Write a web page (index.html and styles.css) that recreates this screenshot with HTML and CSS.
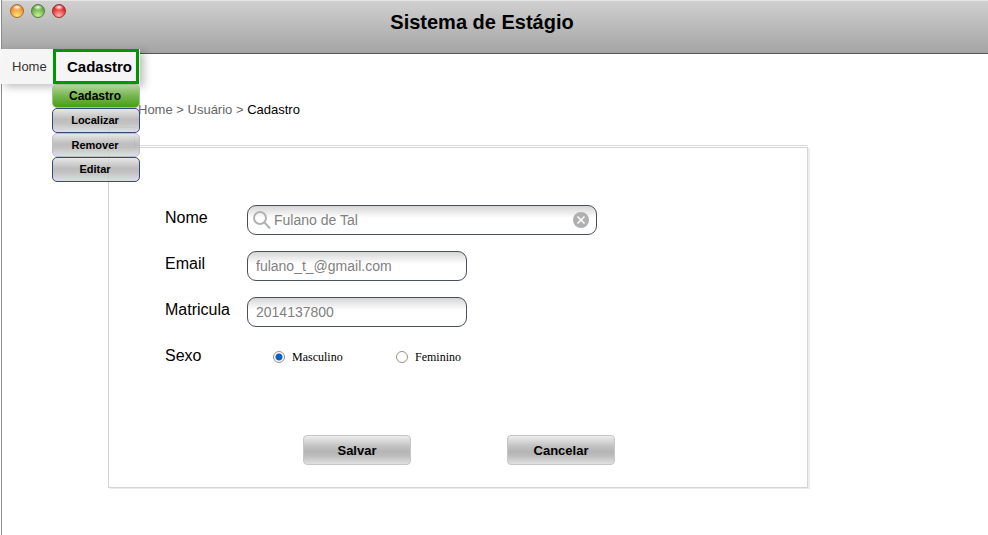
FILE: index.html
```html
<!DOCTYPE html>
<html lang="pt-BR">
<head>
<meta charset="utf-8">
<title>Sistema de Estágio</title>
<link rel="stylesheet" href="styles.css">
</head>
<body>
<div class="window">
  <header class="titlebar">
    <div class="lights">
      <span class="light amber"></span>
      <span class="light green"></span>
      <span class="light red"></span>
    </div>
    <h1>Sistema de Estágio</h1>
  </header>
  <nav class="menu">
    <div class="tabs">
      <a class="tab" href="#">Home</a>
      <a class="tab current" href="#">Cadastro</a>
    </div>
    <div class="submenu">
      <a class="item active" href="#">Cadastro</a>
      <a class="item outlined" href="#">Localizar</a>
      <a class="item" href="#">Remover</a>
      <a class="item outlined" href="#">Editar</a>
    </div>
  </nav>
  <main>
    <div class="breadcrumb"><a href="#">Home</a> &gt; <a href="#">Usuário</a> &gt; <span>Cadastro</span></div>
    <div class="panel-top"><div class="panel-tab"></div></div>
    <form class="panel">
      <div class="row">
        <label for="nome">Nome</label>
        <div class="field search">
          <svg class="lens" viewBox="0 0 18 19"><circle cx="7" cy="7" r="6"/><path d="M11.5 11.5L17 17.5"/></svg>
          <input id="nome" type="text" value="Fulano de Tal">
          <button class="clear" type="button" aria-label="Limpar"><svg viewBox="0 0 16 16"><circle cx="8" cy="8" r="8"/><path d="M4.5 4.5l7 7M11.5 4.5l-7 7"/></svg></button>
        </div>
      </div>
      <div class="row">
        <label for="email">Email</label>
        <div class="field"><input id="email" type="text" value="fulano_t_@gmail.com"></div>
      </div>
      <div class="row">
        <label for="matricula">Matricula</label>
        <div class="field"><input id="matricula" type="text" value="2014137800"></div>
      </div>
      <div class="row" role="radiogroup" aria-labelledby="sexo">
        <span class="caption" id="sexo">Sexo</span>
        <div class="choices">
          <label class="choice"><input type="radio" name="sexo" checked>Masculino</label>
          <label class="choice"><input type="radio" name="sexo">Feminino</label>
        </div>
      </div>
      <div class="actions">
        <button class="button" type="submit">Salvar</button>
        <button class="button" type="button">Cancelar</button>
      </div>
    </form>
  </main>
</div>
</body>
</html>
```
FILE: styles.css
```css
* { box-sizing: border-box; }
body {
  margin: 0;
  background: #fff;
  color: #000;
  font-family: "Liberation Sans", Arial, sans-serif;
}
a { color: inherit; text-decoration: none; }
.window {
  position: relative;
  min-height: 100vh;
  margin-left: 1px;
  border-left: 1px solid #8c8c8c;
}
.titlebar {
  display: grid;
  grid-template-columns: 64px 1fr 98px;
  height: 54px;
  padding-left: 8px;
  border-top: 1px solid #e6e6e6;
  border-bottom: 1px solid #555;
  background: linear-gradient(#d0d0d0, #a4a4a4);
}
.lights { display: flex; gap: 7px; padding-top: 3px; }
.light {
  width: 14px;
  height: 14px;
  border: 1px solid;
  border-radius: 50%;
}
.amber { border-color: #a8682c; background: radial-gradient(ellipse 5px 3px at 50% 18%, #fff, transparent), radial-gradient(circle at 50% 90%, #ffe27a, #ee9c38 60%, #b8641c); }
.green { border-color: #4f7f38; background: radial-gradient(ellipse 5px 3px at 50% 18%, #fff, transparent), radial-gradient(circle at 50% 90%, #c8f598, #70b048 60%, #3a7a24); }
.red { border-color: #982c2c; background: radial-gradient(ellipse 5px 3px at 50% 18%, #fff, transparent), radial-gradient(circle at 50% 90%, #ffb4b4, #e83434 60%, #a01414); }
h1 {
  margin: 0;
  font-size: 20px;
  line-height: 42px;
  text-align: center;
}
.menu {
  position: absolute;
  z-index: 1;
  top: 49px;
  left: -1px;
}
.tabs {
  display: flex;
  height: 35px;
  background: #f5f5f5;
  box-shadow: 4px 3px 8px rgba(0, 0, 0, .25);
}
.tab {
  width: 52px;
  padding-left: 11px;
  color: #333;
  font-size: 13px;
  line-height: 35px;
}
.current {
  width: 86px;
  padding-left: 11px;
  border: 3px solid #009600;
  color: #000;
  font-size: 15px;
  font-weight: bold;
  line-height: 29px;
}
.submenu {
  position: relative;
  width: 88px;
  margin-left: 51px;
}
.item {
  display: block;
  height: 24px;
  padding-right: 2px;
  border: 1px solid #bdbdbd;
  border-radius: 5px;
  background: linear-gradient(rgba(228, 228, 228, .88), rgba(180, 180, 180, .88) 45%, rgba(184, 184, 184, .88) 60%, rgba(218, 218, 218, .88));
  font-size: 11px;
  font-weight: bold;
  line-height: 22px;
  text-align: center;
}
.active {
  border-color: #9fc48a;
  background: linear-gradient(#b2d59c, #76b550 50%, #46a00f);
  font-size: 12px;
}
.outlined {
  height: 25px;
  border-color: #34497c;
  line-height: 23px;
}
main { padding: 48px 0 0 106px; }
.breadcrumb {
  padding-left: 30px;
  color: #666;
  font-size: 13px;
  line-height: 16px;
}
.breadcrumb span { color: #000; }
.panel-top {
  max-width: 700px;
  margin-top: 9px;
  padding-bottom: 1px;
  border-left: 1px solid #d4d4d4;
}
.panel-tab {
  height: 19px;
  background: linear-gradient(#d9d9d9, #d9d9d9) 25px 100% / 100% 1px no-repeat;
}
.panel-tab::before {
  content: "";
  display: block;
  width: 25px;
  height: 19px;
  border: solid #c4c4c4;
  border-width: 1px 1px 0 0;
}
.panel {
  max-width: 700px;
  padding: 57px 56px 22px;
  border: 1px solid #d4d4d4;
  box-shadow: 2px 1px 0 #ececec;
}
.row {
  display: grid;
  grid-template-columns: 82px 1fr;
  align-items: start;
  margin-bottom: 16px;
}
.row > label, .caption { padding-top: 3px; font-size: 16px; line-height: 20px; }
.field {
  display: flex;
  align-items: center;
  width: 220px;
  height: 30px;
  padding: 0 8px;
  border: 1px solid #4a5058;
  border-radius: 9px;
  background: linear-gradient(#d6d6d6, #fff 12px);
}
.field input {
  flex: 1;
  min-width: 0;
  padding: 0;
  border: 0;
  outline: 0;
  background: none;
  color: #808080;
  font: 14px "Liberation Sans", Arial, sans-serif;
}
.search { width: 350px; padding: 0 7px 0 5px; }
.lens {
  width: 18px;
  height: 19px;
  margin-right: 3px;
  fill: none;
  stroke: #b2b2b2;
  stroke-width: 2;
}
.clear { width: 16px; height: 16px; padding: 0; border: 0; background: none; }
.clear svg { display: block; fill: #b0b0b0; stroke: #fff; stroke-width: 1.5; }
.clear circle { stroke: none; }
.choices { display: flex; padding: 5px 0 0 26px; }
.choice {
  display: flex;
  align-items: center;
  width: 123px;
  font: 12px/18px "Liberation Serif", "Times New Roman", serif;
}
.choice input {
  appearance: none;
  width: 12px;
  height: 12px;
  margin: 0 7px 0 0;
  border: 1px solid #999189;
  border-radius: 50%;
  background: #fff;
}
.choice input:checked { background: radial-gradient(circle, #0a5fc4 3px, #fff 4px); }
.actions { display: flex; gap: 96px; padding: 53px 0 0 138px; }
.button {
  width: 108px;
  height: 30px;
  padding: 0;
  border: 1px solid #c6c6c6;
  border-radius: 4px;
  background: linear-gradient(#ededed, #c4c4c4 35%, #b5b5b5 55%, #bcbcbc 70%, #e0e0e0);
  color: #000;
  font: bold 13px "Liberation Sans", Arial, sans-serif;
}
```
